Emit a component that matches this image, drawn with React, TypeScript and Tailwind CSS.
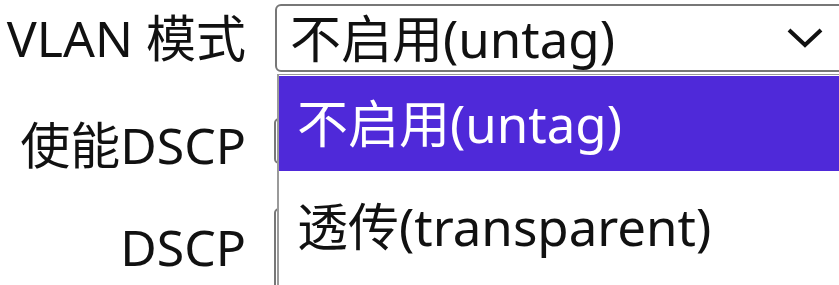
import React from "react";

const font = {
  fontFamily: '"Noto Sans", "Noto Sans CJK SC", sans-serif',
};

function Chevron() {
  return (
    <svg width="36" height="22" viewBox="0 0 36 22" className="shrink-0">
      <polyline
        points="2,3 18,18 34,3"
        fill="none"
        stroke="#111"
        strokeWidth="4"
        strokeLinejoin="miter"
      />
    </svg>
  );
}

export default function App() {
  return (
    <div
      className="relative w-[839px] h-[285px] overflow-hidden bg-white text-[50px] leading-none text-[#111]"
      style={font}
    >
      <div className="flex flex-col pt-[4px]">
        {/* VLAN mode */}
        <div className="flex items-center h-[68px]">
          <div className="w-[246px] shrink-0 text-right whitespace-nowrap">VLAN 模式</div>
          <div className="ml-[29px] w-[620px] h-[68px] shrink-0 flex items-center justify-between border-2 border-[#777] rounded-[6px] pl-[13px] pr-[70px] bg-white text-[51px]">
            <span className="whitespace-nowrap">不启用(untag)</span>
            <Chevron />
          </div>
        </div>

        {/* enable DSCP */}
        <div className="flex items-center h-[54px] mt-[46px]">
          <div className="w-[246px] shrink-0 text-right whitespace-nowrap">使能DSCP</div>
          <div className="ml-[28px] w-[400px] h-[46px] self-start shrink-0 border-2 border-[#777] rounded-[5px]" />
        </div>

        {/* DSCP */}
        <div className="flex items-center h-[78px] mt-[36px]">
          <div className="w-[246px] shrink-0 text-right whitespace-nowrap">DSCP</div>
          <div className="ml-[28px] w-[400px] h-[90px] self-start shrink-0 border-2 border-[#777] rounded-[5px]" />
        </div>
      </div>

      {/* open dropdown list */}
      <div className="absolute left-[277px] top-[74px] w-[620px] h-[260px] bg-white border-l-2 border-t border-[#9a9a9a] text-[51px]">
        <div className="mt-[1px] h-[95px] bg-[#4f29d9] text-white flex items-center pl-[18px] whitespace-nowrap">
          不启用(untag)
        </div>
        <div className="h-[110px] flex items-center pl-[18px] whitespace-nowrap">
          透传(transparent)
        </div>
      </div>
    </div>
  );
}
